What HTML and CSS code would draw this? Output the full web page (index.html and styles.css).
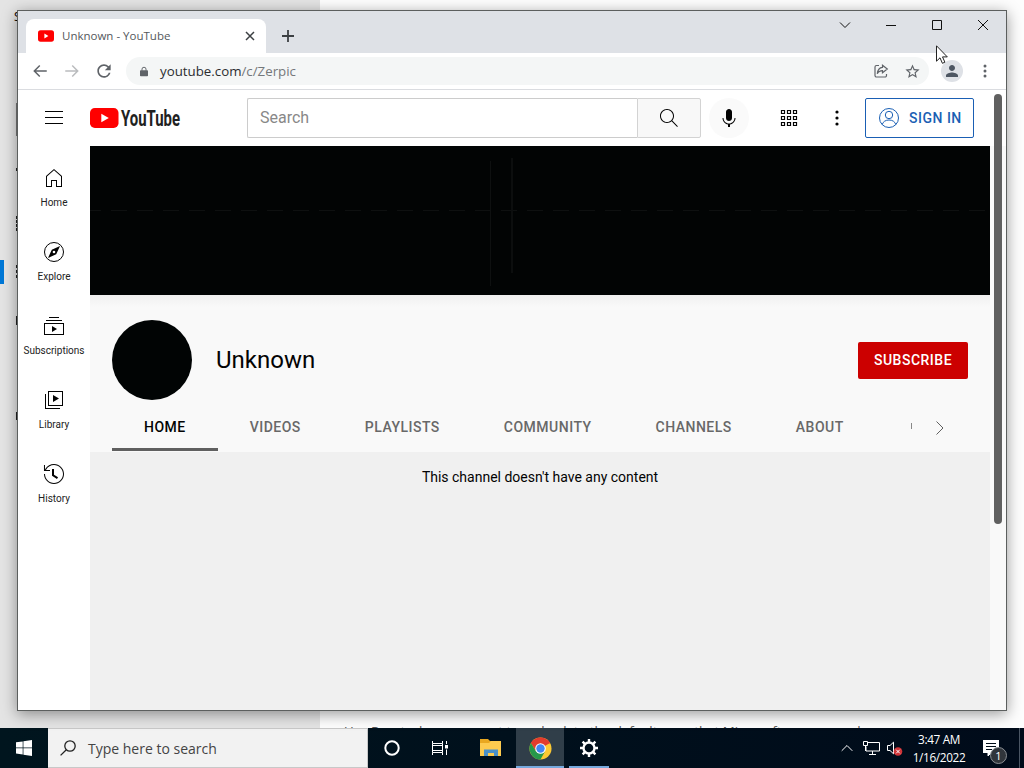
FILE: index.html
```
<!DOCTYPE html>
<html lang="en">
<head>
    <meta charset="UTF-8">
    <meta name="viewport" content="width=device-width, initial-scale=1.0">
    <title>Unknown - YouTube</title>
    <link rel="stylesheet" href="styles.css">
</head>
<body>
    <div class="desktop">
        <!-- Settings window behind the browser -->
        <div class="settings">
            <div class="settings-side">
                <span class="settings-title">Settings</span>
                <span class="settings-marker"></span>
                <i class="peek peek-input"></i>
                <i class="peek peek-a"></i>
                <i class="peek peek-b"></i>
                <i class="peek peek-c"></i>
                <i class="peek peek-d"></i>
                <i class="peek peek-e"></i>
                <i class="peek peek-f"></i>
                <i class="peek peek-g"></i>
            </div>
            <div class="settings-main">
                <p>Use Reset when you want to go back to the default apps that Microsoft recommends</p>
            </div>
        </div>

        <div class="browser">
            <div class="tab-strip">
                <div class="tab">
                    <svg class="favicon" viewBox="0 0 16 12"><rect width="16" height="11.4" y=".3" rx="2.6" fill="#f00"/><path d="M6.4 3.6v4.8L10.4 6z" fill="#fff"/></svg>
                    <span class="tab-title">Unknown - YouTube</span>
                    <svg class="tab-close" viewBox="0 0 10 10"><path d="M1 1l8 8M9 1l-8 8"/></svg>
                </div>
                <svg class="new-tab" viewBox="0 0 12 12"><path d="M6 0v12M0 6h12"/></svg>
                <div class="window-controls">
                    <svg viewBox="0 0 12 12"><path d="M1 3.5l5 5 5-5"/></svg>
                    <svg viewBox="0 0 12 12"><path d="M1 6.5h10"/></svg>
                    <svg viewBox="0 0 12 12"><path d="M1.5 1.5h9v9h-9z"/></svg>
                    <svg viewBox="0 0 12 12"><path d="M1 1l10 10M11 1L1 11"/></svg>
                </div>
            </div>

            <div class="toolbar">
                <svg class="nav-icon" viewBox="0 0 24 24"><path d="M21 11H6.8l5.6-5.6L11 4l-8 8 8 8 1.4-1.4L6.8 13H21z"/></svg>
                <svg class="nav-icon disabled" viewBox="0 0 24 24"><path d="M3 11h14.2l-5.6-5.6L13 4l8 8-8 8-1.4-1.4 5.6-5.6H3z"/></svg>
                <svg class="nav-icon" viewBox="0 0 24 24"><path d="M17.65 6.35A7.958 7.958 0 0 0 12 4c-4.42 0-7.99 3.58-7.99 8s3.57 8 7.99 8c3.73 0 6.84-2.55 7.73-6h-2.08A5.99 5.99 0 0 1 12 18c-3.31 0-6-2.69-6-6s2.69-6 6-6c1.66 0 3.14.69 4.22 1.78L13 11h7V4l-2.35 2.35z"/></svg>
                <div class="address-bar">
                    <svg class="lock" viewBox="0 0 10 12"><path d="M1 4.5h8a1 1 0 0 1 1 1V11a1 1 0 0 1-1 1H1a1 1 0 0 1-1-1V5.5a1 1 0 0 1 1-1z"/><path d="M2.5 5V3a2.5 2.3 0 0 1 5 0v2" fill="none" stroke="#5f6368" stroke-width="1.2"/></svg>
                    <span class="url">youtube.com<span>/c/Zerpic</span></span>
                    <svg class="share" viewBox="0 0 16 16"><path d="M6 2.500H3.500a1.500 1.500 0 0 0-1.500 1.500v8.500A1.500 1.500 0 0 0 3.500 14h8.500a1.500 1.500 0 0 0 1.500-1.500V11M9.500 2.200l4.800 3.800-4.800 3.800V7.600C7 7.600 5.300 8.700 4.300 10.800 4.600 7.500 6.200 4.700 9.500 4.400z"/></svg>
                    <svg class="star" viewBox="0 0 24 24"><path d="M22 9.24l-7.19-.62L12 2 9.19 8.63 2 9.24l5.46 4.73L5.82 21 12 17.27 18.18 21l-1.63-7.03L22 9.24zM12 15.4l-3.76 2.27 1-4.28-3.32-2.88 4.38-.38L12 6.1l1.71 4.04 4.38.38-3.32 2.88 1 4.28L12 15.4z"/></svg>
                </div>
                <div class="profile">
                    <svg viewBox="0 0 24 24"><path d="M12 12c2.21 0 4-1.79 4-4s-1.79-4-4-4-4 1.79-4 4 1.79 4 4 4zm0 2c-2.67 0-8 1.34-8 4v2h16v-2c0-2.66-5.33-4-8-4z"/></svg>
                </div>
                <svg class="menu-dots" viewBox="0 0 4 14"><circle cx="2" cy="2" r="1.5"/><circle cx="2" cy="7" r="1.5"/><circle cx="2" cy="12" r="1.5"/></svg>
            </div>

            <div class="page">
                <header class="masthead">
                    <svg class="icon hamburger" viewBox="0 0 24 24"><path d="M21 6H3V5h18v1zm0 5H3v1h18v-1zm0 6H3v1h18v-1z"/></svg>
                    <svg class="logo" viewBox="0 0 92 28">
                        <rect y="4" width="28.5" height="20" rx="4.8" fill="#f00"/>
                        <path d="M11.3 9.7v8.6l7.5-4.3z" fill="#fff"/>
                        <text x="31" y="21.8" textLength="59" lengthAdjust="spacingAndGlyphs">YouTube</text>
                    </svg>
                    <div class="search">
                        <div class="search-input">Search</div>
                        <div class="search-button">
                            <svg class="icon" viewBox="0 0 24 24"><path d="M20.87 20.17l-5.59-5.59C16.35 13.35 17 11.75 17 10c0-3.87-3.13-7-7-7s-7 3.13-7 7 3.13 7 7 7c1.75 0 3.35-.65 4.58-1.71l5.59 5.59.7-.71zM10 16c-3.31 0-6-2.69-6-6s2.69-6 6-6 6 2.69 6 6-2.69 6-6 6z"/></svg>
                        </div>
                    </div>
                    <div class="mic">
                        <svg class="icon" viewBox="0 0 24 24"><path d="M12 3c-1.66 0-3 1.37-3 3.07v5.86C9 13.63 10.34 15 12 15s3-1.37 3-3.07V6.07C15 4.37 13.66 3 12 3zM18.5 12h-1c0 3.03-2.47 5.5-5.5 5.5S6.5 15.03 6.5 12h-1c0 3.24 2.39 5.93 5.5 6.41V21h2v-2.59c3.11-.48 5.5-3.17 5.5-6.41z"/></svg>
                    </div>
                    <svg class="icon apps" viewBox="0 0 24 24"><path d="M4.500 4.500h3v3h-3zM10.500 4.500h3v3h-3zM16.500 4.500h3v3h-3zM4.500 10.500h3v3h-3zM10.500 10.500h3v3h-3zM16.500 10.500h3v3h-3zM4.500 16.500h3v3h-3zM10.500 16.500h3v3h-3zM16.500 16.500h3v3h-3z"/></svg>
                    <svg class="icon more" viewBox="0 0 24 24"><circle cx="12" cy="6" r="1.6"/><circle cx="12" cy="12" r="1.6"/><circle cx="12" cy="18" r="1.6"/></svg>
                    <a class="sign-in">
                        <svg viewBox="0 0 24 24"><circle cx="12" cy="12" r="9.5"/><circle cx="12" cy="9" r="3.7"/><path d="M5.2 18.600c.8-3 3.400-4.600 6.800-4.600s6 1.600 6.800 4.600"/></svg>
                        SIGN IN
                    </a>
                </header>

                <div class="page-body">
                    <nav class="guide">
                        <a><svg class="icon" viewBox="0 0 24 24"><path d="M12 4.33l7 6.12V20h-4v-6H9v6H5v-9.55l7-6.12M12 3l-8 7v11h6v-6h4v6h6V10l-8-7z"/></svg>Home</a>
                        <a><svg class="icon" viewBox="0 0 24 24"><path fill-rule="evenodd" d="M9.8 9.8l-3.83 8.23 8.23-3.83 3.83-8.23L9.8 9.8zM12 10.67a1.33 1.33 0 1 1 0 2.66 1.33 1.33 0 0 1 0-2.66z"/><circle cx="12" cy="12" r="9.5" fill="none" stroke="#030303"/></svg>Explore</a>
                        <a><svg class="icon" viewBox="0 0 24 24"><path fill-rule="evenodd" d="M10 18v-6l5 3-5 3zM17 3H7v1h10V3zM20 6H4v1h16V6zM22 9H2v12h20V9zM3 10h18v10H3V10z"/></svg>Subscriptions</a>
                        <a><svg class="icon" viewBox="0 0 24 24"><path fill-rule="evenodd" d="M11 7l6 3.500-6 3.500V7zM18 20H4V6H3v15h15v-1zM21 18H6V3h15v15zM7 17h13V4H7v13z"/></svg>Library</a>
                        <a><svg class="icon" viewBox="0 0 24 24"><path d="M14.97 16.95L10 13.87V7h2v5.76l4.03 2.49-1.06 1.7zM22 12c0 5.51-4.49 10-10 10S2 17.51 2 12h1c0 4.96 4.04 9 9 9s9-4.04 9-9-4.04-9-9-9C8.81 3 5.92 4.64 4.28 7.38 4.17 7.56 4.06 7.75 3.94 8H8v1H1.96V3h1v4.74l.46-.88C5.22 3.86 8.51 2 12 2c5.51 0 10 4.49 10 10z"/></svg>History</a>
                    </nav>

                    <main class="channel">
                        <div class="banner"></div>
                        <div class="channel-header">
                            <div class="channel-info">
                                <div class="avatar"></div>
                                <h1>Unknown</h1>
                                <button class="subscribe">SUBSCRIBE</button>
                            </div>
                            <div class="tabs">
                                <a class="active">HOME</a>
                                <a>VIDEOS</a>
                                <a>PLAYLISTS</a>
                                <a>COMMUNITY</a>
                                <a>CHANNELS</a>
                                <a>ABOUT</a>
                                <span class="tab-cut"></span>
                                <svg class="icon tabs-next" viewBox="0 0 24 24"><path d="M8.500 5.500l6.500 6.500-6.500 6.500"/></svg>
                            </div>
                        </div>
                        <p class="empty">This channel doesn't have any content</p>
                    </main>
                    <div class="scroll-gutter"></div>
                </div>
                <div class="scroll-thumb"></div>
            </div>
        </div>

        <svg class="cursor" viewBox="0 0 12 19"><path d="M.5.8v15.400l3.500-3.400 2.400 5.500 2.500-1.100-2.400-5.300h4.800z"/></svg>

        <div class="taskbar">
            <div class="start">
                <svg viewBox="0 0 16 16"><path d="M0 2.300l6.700-.9v6.100H0zM7.400 1.300L16 .1v7.400H7.400zM0 8.300h6.700v6.200L0 13.600zM7.400 8.300H16V16l-8.600-1.200z"/></svg>
            </div>
            <div class="task-search">
                <svg viewBox="0 0 16 16"><circle cx="10" cy="6" r="5.2"/><path d="M6.300 9.700L.6 15.400"/></svg>
                Type here to search
            </div>
            <div class="task-item">
                <svg class="cortana" viewBox="0 0 16 16"><circle cx="8" cy="8" r="6.7"/></svg>
            </div>
            <div class="task-item">
                <svg class="task-view" viewBox="0 0 16 16"><path d="M.5 1v2.500h10V1M.5 15v-2.500h10V15M.5 3.500v9M10.500 3.500v9M1 5.500h9M1 10.500h9M14.500 1v3M14.500 9.500V15"/><path d="M13 5h3v3.500h-3z" fill="#fff" stroke="none"/></svg>
            </div>
            <div class="task-item folder-item">
                <svg class="folder" viewBox="0 0 22 18"><path d="M0 0h8l2 2h11v15H0z" fill="#e9a820"/><path d="M0 4h9l2-2h10v15H0z" fill="#fdcb4f"/><path d="M4 17v-6.500h14V17h-4v-3H8v3z" fill="#4a90c8"/></svg>
            </div>
            <div class="task-item focused">
                <svg class="chrome" viewBox="0 0 24 24">
                    <circle cx="12" cy="12" r="11.5" fill="#fcc934"/>
                    <path d="M12 12L2.04 6.25A11.5 11.5 0 0 1 21.96 6.25z" fill="#e33b2e"/>
                    <path d="M12 6.5h10.100L21 5 12 .5 4 4 2 6.300l5.240 8.450z" fill="#e33b2e"/>
                    <path d="M2.04 6.25A11.5 11.5 0 0 0 12 23.5l4.76-8.75H7.24z" fill="#26984a"/>
                    <circle cx="12" cy="12" r="5.5" fill="#fff"/>
                    <circle cx="12" cy="12" r="4.4" fill="#4285f4"/>
                </svg>
            </div>
            <div class="task-item opened">
                <svg class="gear" viewBox="0 0 20 20"><circle cx="10" cy="10" r="5.5"/><path d="M10 4.500V1M10 15.500V19M4.500 10H1M15.500 10H19M6.100 6.100L3.600 3.600M13.900 13.900l2.500 2.500M6.100 13.900l-2.500 2.500M13.900 6.100l2.500-2.500"/></svg>
            </div>
            <div class="tray">
                <svg class="tray-up" viewBox="0 0 12 8"><path d="M.7 6.800L6 1.500l5.300 5.300"/></svg>
                <svg class="tray-net" viewBox="0 0 17 14"><path d="M4.500 1.500h12v8.500H3V5.500M9.500 10v3M6 13.500h7M.5.5h4v4h-4zM2.500 4.500V10"/></svg>
                <svg class="tray-sound" viewBox="0 0 17 15"><path d="M1.500 4.500H4L7.500 1.200v11.600L4 9.500H1.500z"/><circle cx="12" cy="10.5" r="4.300" fill="#d13438" stroke="none"/><path d="M10.200 8.700l3.600 3.600M13.800 8.700l-3.600 3.600"/></svg>
                <div class="clock">
                    <span class="time">3:47 AM</span>
                    <span class="date">1/16/2022</span>
                </div>
                <div class="notifications">
                    <svg viewBox="0 0 16 16"><path d="M0 0h16v12.500H8.500L5 16v-3.500H0z" fill="#fff"/><path d="M3 3.500h10M3 6.500h10M3 9.500h6" stroke="#000c18"/></svg>
                    <span class="badge">1</span>
                </div>
            </div>
        </div>
    </div>
</body>
</html>
```
FILE: styles.css
```
:root {
    --yt-text: #030303;
    --yt-blue: #1a5fb4;
    --chrome-grey: #5f6368;
    --ui-font: "Open Sans", "Noto Sans", sans-serif;
}

* {
    margin: 0;
    padding: 0;
    box-sizing: border-box;
}

body {
    font-family: Roboto, sans-serif;
    color: var(--yt-text);
    overflow: hidden;
}

svg {
    display: block;
    flex: none;
}

.desktop {
    position: relative;
    display: flex;
    flex-direction: column;
    width: 1024px;
    height: 768px;
    overflow: hidden;
}

/* settings window */
.settings {
    flex: 1;
    display: flex;
    min-height: 0;
    font-family: var(--ui-font);
}

.settings-side {
    position: relative;
    width: 320px;
    background: #e4e4e4;
}

.settings-title {
    position: absolute;
    left: 14px;
    top: 8px;
    font-size: 12px;
}

.settings-marker {
    position: absolute;
    left: 0;
    top: 260px;
    width: 4px;
    height: 24px;
    background: #0078d7;
}

.peek {
    position: absolute;
    left: 16px;
    width: 2px;
    background: #222;
}

.peek-input { top: 103px; height: 33px; background: #777; }
.peek-a { top: 168px; height: 3px; }
.peek-b { top: 216px; height: 15px; background: repeating-linear-gradient(#222 0 3px, #e5e5e5 3px 4px); }
.peek-c { top: 265px; height: 13px; background: repeating-linear-gradient(#222 0 3px, #e5e5e5 3px 5px); }
.peek-d { top: 316px; height: 9px; }
.peek-e { left: 17px; top: 363px; height: 12px; }
.peek-f { top: 412px; height: 8px; }
.peek-g { left: 17px; top: 455px; height: 12px; }

.settings-main {
    flex: 1;
    display: flex;
    align-items: flex-end;
    background: #fdfdfd;
    overflow: hidden;
}

.settings-main p {
    margin: 0 0 -12px 24px;
    font-size: 13.3px;
    line-height: 18px;
    color: #555;
    white-space: nowrap;
}

/* browser window */
.browser {
    position: absolute;
    left: 17px;
    top: 10px;
    width: 990px;
    height: 701px;
    display: flex;
    flex-direction: column;
    border: 1px solid #5c5f5e;
    background: #fff;
    box-shadow: 0 3px 14px rgba(0, 0, 0, 0.4);
}

.tab-strip {
    display: flex;
    align-items: center;
    height: 42px;
    background: #dee1e6;
    padding-left: 8px;
}

.tab {
    display: flex;
    align-items: center;
    align-self: flex-end;
    width: 240px;
    height: 34px;
    padding: 0 11px 0 12px;
    border-radius: 8px 8px 0 0;
    background: #fff;
}

.favicon {
    width: 16px;
    height: 12px;
}

.tab-title {
    flex: 1;
    margin-left: 8px;
    padding-bottom: 1px;
    font-family: var(--ui-font);
    font-size: 11.5px;
    color: #54585c;
}

.tab-close {
    width: 10px;
    height: 10px;
    stroke: #3c4043;
    stroke-width: 1.5;
}

.new-tab {
    width: 12px;
    height: 12px;
    margin: 8px 0 0 16px;
    stroke: #3c4043;
    stroke-width: 1.8;
}

.window-controls {
    display: flex;
    gap: 34px;
    margin: -14px 17px 0 auto;
}

.window-controls svg {
    width: 12px;
    height: 12px;
    fill: none;
    stroke: #111;
    stroke-width: 1;
}

.toolbar {
    display: flex;
    align-items: center;
    height: 37px;
    padding: 0 18px 0 13px;
    border-bottom: 1px solid #dadce0;
    background: #fff;
}

.nav-icon {
    width: 18px;
    height: 18px;
    margin-right: 14px;
    fill: var(--chrome-grey);
}

.nav-icon.disabled {
    fill: #babcbe;
}

.toolbar .nav-icon:nth-child(3) {
    width: 20px;
    height: 20px;
    margin: 0 12px 0 -1px;
}

.address-bar {
    display: flex;
    align-items: center;
    flex: 1;
    height: 28px;
    padding: 0 8px 0 14px;
    border-radius: 14px;
    background: #f4f6f6;
}

.lock {
    width: 8px;
    height: 11px;
    fill: var(--chrome-grey);
}

.url {
    flex: 1;
    margin-left: 12px;
    font-family: var(--ui-font);
    font-size: 13.3px;
    color: #2b2d30;
}

.url span {
    color: #74787b;
}

.share {
    width: 16px;
    height: 16px;
    margin-right: 15px;
    fill: none;
    stroke: var(--chrome-grey);
    stroke-width: 1.2;
}

.star {
    width: 17px;
    height: 17px;
    fill: var(--chrome-grey);
}

.profile {
    display: grid;
    place-items: center;
    width: 22px;
    height: 22px;
    margin: 0 20px 0 12px;
    border-radius: 50%;
    background: #dee1e6;
}

.profile svg {
    width: 18px;
    height: 18px;
    fill: #4d5662;
}

.menu-dots {
    width: 4px;
    height: 14px;
    margin-right: 1px;
    fill: var(--chrome-grey);
}

/* youtube page */
.page {
    position: relative;
    flex: 1;
    display: flex;
    flex-direction: column;
    min-height: 0;
}

.icon {
    width: 24px;
    height: 24px;
    fill: var(--yt-text);
}

.masthead {
    display: flex;
    align-items: center;
    height: 56px;
    padding: 0 32px 0 24px;
}

.logo {
    width: 92px;
    height: 28px;
    margin: 0 65px 0 24px;
}

.logo text {
    font: 700 22px Roboto, sans-serif;
    fill: #212121;
}

.search {
    display: flex;
    width: 454px;
    height: 40px;
}

.search-input {
    flex: 1;
    padding-left: 12px;
    border: 1px solid #ccc;
    border-right: 0;
    border-radius: 2px 0 0 2px;
    font-size: 16px;
    line-height: 37px;
    color: #888;
}

.search-button {
    display: grid;
    place-items: center;
    width: 64px;
    border: 1px solid #d3d3d3;
    border-radius: 0 2px 2px 0;
    background: #f8f8f8;
}

.mic {
    display: grid;
    place-items: center;
    width: 40px;
    height: 40px;
    margin-left: 8px;
    border-radius: 50%;
    background: #fafafa;
}

.apps {
    margin-left: 28px;
    fill: none;
    stroke: var(--yt-text);
    stroke-width: 1.2;
}

.more {
    margin-left: 24px;
}

.sign-in {
    display: flex;
    align-items: center;
    width: 109px;
    height: 40px;
    margin-left: auto;
    padding-left: 11px;
    border: 1px solid var(--yt-blue);
    border-radius: 2px;
    font-size: 14px;
    font-weight: 500;
    letter-spacing: 0.5px;
    white-space: nowrap;
    color: var(--yt-blue);
}

.sign-in svg {
    width: 24px;
    height: 24px;
    margin-right: 8px;
    fill: none;
    stroke: var(--yt-blue);
}

.page-body {
    flex: 1;
    display: flex;
    min-height: 0;
}

.guide {
    width: 72px;
    padding-top: 4px;
}

.guide a {
    display: flex;
    flex-direction: column;
    align-items: center;
    gap: 6px;
    height: 74px;
    padding-top: 16px;
    font-size: 10px;
    line-height: 14px;
    color: #222;
}

.channel {
    flex: 1;
    min-width: 0;
    background: #f0f0f0;
}

/* almost black, with a few faint streaks */
.banner {
    height: 149px;
    background:
        linear-gradient(#0e1010, #0e1010) 400px 15px / 1px 125px no-repeat,
        linear-gradient(#0c0e0e, #0c0e0e) 421px 12px / 2px 115px no-repeat,
        linear-gradient(90deg, #0e1010 60%, transparent 0) 437px 64px / 26px 1px repeat-x,
        #020404;
    background-clip: border-box;
}

.channel-header {
    height: 157px;
    padding: 25px 22px 0;
    background: linear-gradient(#f0f0f0, #f9f9f9 12px);
}

.channel-info {
    display: flex;
    align-items: center;
    height: 80px;
}

.avatar {
    width: 80px;
    height: 80px;
    border-radius: 50%;
    background: #010404;
}

h1 {
    flex: 1;
    margin-left: 24px;
    font-size: 24px;
    font-weight: 400;
}

.subscribe {
    width: 110px;
    height: 37px;
    border: 0;
    border-radius: 2px;
    background: #c00;
    color: #fff;
    font: 500 14px Roboto, sans-serif;
    letter-spacing: 0.5px;
}

.tabs {
    display: flex;
    height: 48px;
    margin-top: 3px;
}

.tabs a {
    padding: 0 32px;
    font-size: 14px;
    font-weight: 500;
    line-height: 48px;
    letter-spacing: 0.49px;
    color: #686868;
}

.tabs a.active {
    color: var(--yt-text);
    border-bottom: 3px solid #606060;
}

.tab-cut {
    width: 1px;
    height: 6px;
    margin: 20px 0 0 35px;
    background: #888;
}

.tabs-next {
    margin: 13px 16px 0 auto;
    fill: none;
    stroke: #606060;
}

.empty {
    padding-top: 16px;
    font-size: 14px;
    line-height: 18px;
    text-align: center;
}

.scroll-gutter {
    width: 16px;
    background: #f9f9f9;
}

.scroll-thumb {
    position: absolute;
    right: 4px;
    top: 4px;
    width: 8px;
    height: 430px;
    border-radius: 4px;
    background: #606060;
}

.cursor {
    position: absolute;
    left: 936px;
    top: 45px;
    width: 12px;
    height: 19px;
    fill: #fff;
    stroke: #222;
}

/* taskbar */
.taskbar {
    display: flex;
    height: 40px;
    background: linear-gradient(90deg, #00151e, #000b1a);
    font-family: var(--ui-font);
    color: #fff;
}

.start {
    display: grid;
    place-items: center;
    width: 48px;
}

.start svg {
    width: 16px;
    height: 16px;
    fill: #fff;
}

.task-search {
    display: flex;
    align-items: center;
    gap: 12px;
    width: 320px;
    padding-left: 12px;
    border: 1px solid #c8c8c8;
    border-left: 0;
    background: #f2f2f2;
    color: #444;
    font-size: 14px;
}

.task-search svg {
    width: 16px;
    height: 16px;
    fill: none;
    stroke: #222;
    stroke-width: 1.3;
}

.task-item {
    display: grid;
    place-items: center;
    width: 48px;
}

.cortana {
    width: 16px;
    height: 16px;
    fill: none;
    stroke: #fff;
    stroke-width: 2;
}

.task-view {
    width: 16px;
    height: 16px;
    fill: none;
    stroke: #fff;
}

.folder-item {
    width: 52px;
    padding-left: 1px;
}

.folder {
    width: 22px;
    height: 18px;
}

.focused {
    margin-right: 5px;
    background: #303e49;
    box-shadow: inset 0 -2px #76a9dd;
}

.chrome {
    width: 23px;
    height: 23px;
}

.opened {
    width: 40px;
    box-shadow: inset 0 -2px #76a9dd;
}

.gear {
    width: 20px;
    height: 20px;
    fill: none;
    stroke: #fff;
    stroke-width: 2.4;
}

.tray {
    display: flex;
    align-items: center;
    margin-left: auto;
    margin-right: 4px;
    padding-right: 20px;
    border-right: 1px solid #4a5563;
}

.tray svg {
    fill: none;
    stroke: #fff;
}

.tray-up {
    width: 12px;
    height: 8px;
}

.tray-net {
    width: 17px;
    height: 14px;
    margin-left: 10px;
}

.tray-sound {
    width: 17px;
    height: 15px;
    margin-left: 6px;
}

.clock {
    width: 66px;
    margin-left: 3px;
    display: flex;
    flex-direction: column;
    align-items: center;
    font-size: 11.8px;
    line-height: 18px;
    letter-spacing: -0.35px;
}

.notifications {
    position: relative;
    margin-left: 11px;
}

.notifications svg {
    width: 16px;
    height: 16px;
}

.badge {
    position: absolute;
    left: 7px;
    top: 7px;
    width: 17px;
    height: 17px;
    border: 1px solid #8a8f94;
    border-radius: 50%;
    background: #30353b;
    font-size: 11px;
    line-height: 15px;
    text-align: center;
}
```
